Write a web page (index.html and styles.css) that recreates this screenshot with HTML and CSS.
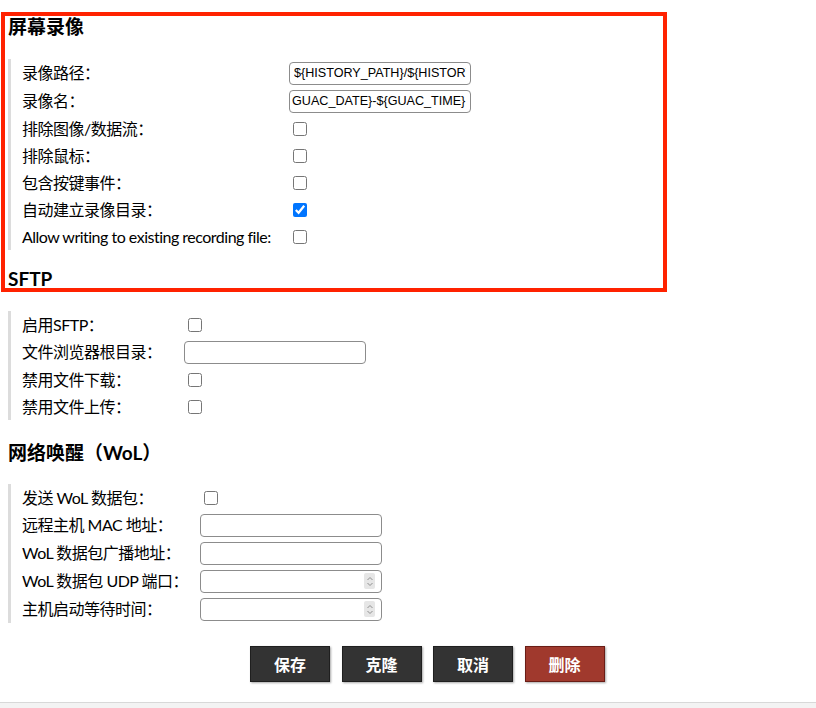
FILE: index.html
```html
<!DOCTYPE html>
<html lang="zh-CN">
<head>
<meta charset="utf-8">
<title>连接设置</title>
<link rel="stylesheet" href="styles.css">
</head>
<body>
<div class="page">
  <div class="annot"></div>

  <h2 class="sec-title sec-title--first">屏幕录像</h2>
  <div class="fields fields--rec">
    <div class="row row--input"><span class="lbl">录像路径：</span><input class="txt" type="text" value="${HISTORY_PATH}/${HISTORY_UUID}"></div>
    <div class="row row--input"><span class="lbl">录像名：</span><input class="txt txt--tail" type="text" value="GUAC_DATE}-${GUAC_TIME}"></div>
    <div class="row"><span class="lbl">排除图像/数据流：</span><input class="chk" type="checkbox"></div>
    <div class="row"><span class="lbl">排除鼠标：</span><input class="chk" type="checkbox"></div>
    <div class="row"><span class="lbl">包含按键事件：</span><input class="chk" type="checkbox"></div>
    <div class="row"><span class="lbl">自动建立录像目录：</span><input class="chk" type="checkbox" checked></div>
    <div class="row"><span class="lbl">Allow writing to existing recording file:</span><input class="chk" type="checkbox"></div>
  </div>

  <h2 class="sec-title sec-title--sftp">SFTP</h2>
  <div class="fields fields--sftp">
    <div class="row"><span class="lbl">启用SFTP：</span><input class="chk" type="checkbox"></div>
    <div class="row row--input"><span class="lbl">文件浏览器根目录：</span><input class="txt" type="text" value=""></div>
    <div class="row"><span class="lbl">禁用文件下载：</span><input class="chk" type="checkbox"></div>
    <div class="row"><span class="lbl">禁用文件上传：</span><input class="chk" type="checkbox"></div>
  </div>

  <h2 class="sec-title sec-title--wol">网络唤醒（WoL）</h2>
  <div class="fields fields--wol">
    <div class="row"><span class="lbl">发送 WoL 数据包：</span><input class="chk" type="checkbox"></div>
    <div class="row row--input"><span class="lbl">远程主机 MAC 地址：</span><input class="txt" type="text" value=""></div>
    <div class="row row--input"><span class="lbl">WoL 数据包广播地址：</span><input class="txt" type="text" value=""></div>
    <div class="row row--input"><span class="lbl">WoL 数据包 UDP 端口：</span>
      <span class="num"><input class="num-in" type="text" value=""><span class="spin"><svg width="10" height="15" viewBox="0 0 10 15"><polyline points="2.5,6 5,3.5 7.5,6" /><polyline points="2.5,9 5,11.5 7.5,9" /></svg></span></span>
    </div>
    <div class="row row--input"><span class="lbl">主机启动等待时间：</span>
      <span class="num"><input class="num-in" type="text" value=""><span class="spin"><svg width="10" height="15" viewBox="0 0 10 15"><polyline points="2.5,6 5,3.5 7.5,6" /><polyline points="2.5,9 5,11.5 7.5,9" /></svg></span></span>
    </div>
  </div>

  <div class="actions">
    <button class="btn" type="button">保存</button>
    <button class="btn" type="button">克隆</button>
    <button class="btn" type="button">取消</button>
    <button class="btn btn--danger" type="button">删除</button>
  </div>
</div>
<div class="footer"></div>
</body>
</html>
```
FILE: styles.css
```css
html, body {
  margin: 0;
  padding: 0;
  background: #fff;
}

body {
  font-family: "Lato", "Noto Sans CJK SC", sans-serif;
  font-size: 16px;
  color: #000;
  letter-spacing: -0.5px;
}

.page {
  position: relative;
  padding: 16px 0 0 8px;
}

.annot {
  position: absolute;
  left: 1px;
  top: 12px;
  width: 666px;
  height: 280px;
  box-sizing: border-box;
  border: 4px solid #ff2200;
  pointer-events: none;
}

.sec-title {
  margin: 0 0 21px 0;
  font-size: 19px;
  line-height: 22px;
  font-weight: bold;
  letter-spacing: 0;
}

.sec-title--sftp {
  margin-top: 18px;
}

.sec-title--wol {
  margin-top: 22px;
  margin-bottom: 20px;
}

.fields {
  border-left: 3px solid #dcdcdc;
  padding-left: 11px;
}

.row {
  display: flex;
  align-items: center;
  height: 27px;
}

.row--input {
  height: 28px;
}

.lbl {
  flex: none;
  white-space: nowrap;
  line-height: 20px;
}

.fields--rec .lbl { width: 267px; }
.fields--sftp .lbl { width: 162px; }
.fields--wol .lbl { width: 178px; }

.txt {
  box-sizing: border-box;
  width: 182px;
  height: 23px;
  margin: 0;
  padding: 0 4px;
  border: 1px solid #8c8c8c;
  border-radius: 4px;
  font-family: "Liberation Sans", sans-serif;
  font-size: 12.6px;
  letter-spacing: 0;
  color: #000;
  background: #fff;
}

.txt--tail {
  padding-left: 2px;
}

.chk {
  width: 14px;
  height: 14px;
  margin: 3px 3px 3px 4px;
}

.num {
  box-sizing: border-box;
  display: flex;
  align-items: center;
  width: 182px;
  height: 23px;
  border: 1px solid #8c8c8c;
  border-radius: 4px;
  background: #fff;
}

.num-in {
  flex: 1;
  min-width: 0;
  height: 100%;
  border: 0;
  padding: 0 4px;
  margin: 0;
  background: transparent;
  font-family: "Liberation Sans", sans-serif;
  font-size: 12.6px;
  outline: none;
}

.spin {
  flex: none;
  display: flex;
  width: 11px;
  height: 16px;
  margin-right: 6px;
  background: #e6e6e6;
  border-radius: 2px;
}

.spin svg {
  margin: auto;
}

.spin polyline {
  fill: none;
  stroke: #8f8f8f;
  stroke-width: 1;
}

.actions {
  display: flex;
  gap: 11.5px;
  margin: 23px 0 0 242px;
}

.btn {
  box-sizing: border-box;
  width: 80px;
  height: 36px;
  margin: 0;
  padding: 0;
  border: 1px solid #1f1f1f;
  background: #333;
  color: #fff;
  font-family: "Lato", "Noto Sans CJK SC", sans-serif;
  font-size: 16px;
  font-weight: bold;
  letter-spacing: 0;
  box-shadow: 1px 1px 2px rgba(0, 0, 0, 0.35);
}

.btn--danger {
  background: #a0392d;
  border-color: #6a1d16;
}

.footer {
  margin-top: 20px;
  height: 40px;
  border-top: 1px solid #d8d8d8;
  background: #f3f3f3;
}
```
